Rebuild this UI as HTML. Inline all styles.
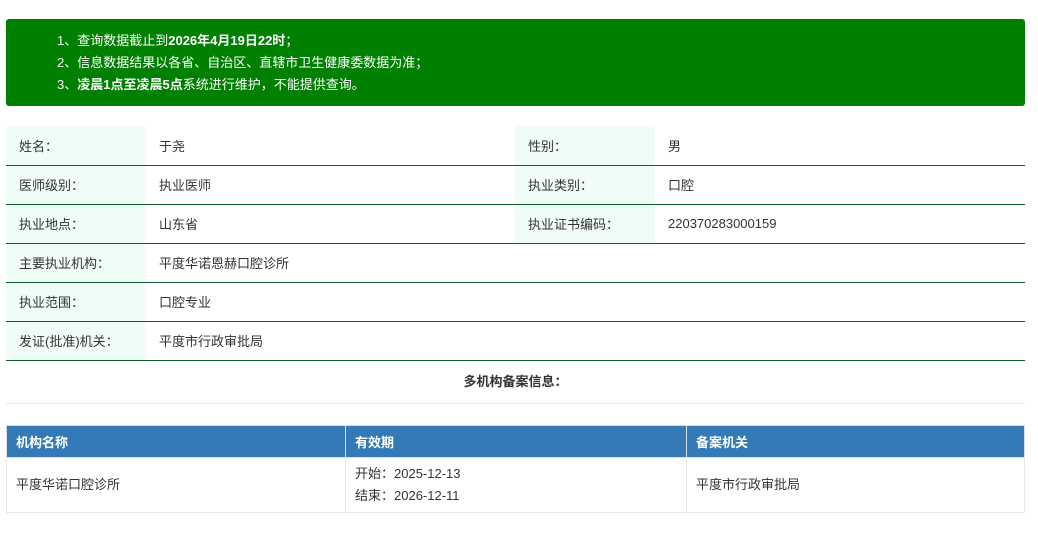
<!DOCTYPE html>
<html><head><meta charset="utf-8"><style>
*{margin:0;padding:0;box-sizing:border-box}
body{width:1038px;height:551px;background:#fff;font-family:"Liberation Sans","Noto Sans CJK SC",sans-serif;font-size:13px;color:#333;position:relative;overflow:hidden}
.notice{position:absolute;left:6px;top:19px;width:1019px;height:87px;background:#008000;border-radius:3px;color:#fff;font-size:13px;padding:11px 0 0 51px;line-height:22px}
.notice b{font-weight:bold}
table.info{position:absolute;left:6px;top:126px;width:1019px;border-collapse:collapse}
table.info td{height:39px;border-bottom:1px solid #0c5c2c;padding-left:13px;vertical-align:middle}
td.l{background:#f0fdf6;width:140px}
td.v{width:369px}
.h{position:absolute;left:6px;top:360px;width:1019px;height:44px;border-bottom:1px solid #e8e8e8;text-align:center;font-weight:bold;line-height:44px}
table.org{position:absolute;left:6px;top:425px;width:1019px;border-collapse:collapse}
table.org th{background:#337ab7;color:#fff;text-align:left;height:32px;padding-left:9px;font-weight:bold;border:1px solid #ddd}
table.org td{height:55px;padding-left:9px;border:1px solid #e8e8e8;line-height:22px}
</style></head><body>
<div class="notice">
<div>1、查询数据截止到<b>2026年4月19日22时</b>；</div>
<div>2、信息数据结果以各省、自治区、直辖市卫生健康委数据为准；</div>
<div>3、<b>凌晨1点至凌晨5点</b>系统进行维护，不能提供查询。</div>
</div>
<table class="info">
<tr><td class="l">姓名：</td><td class="v">于尧</td><td class="l">性别：</td><td>男</td></tr>
<tr><td class="l">医师级别：</td><td class="v">执业医师</td><td class="l">执业类别：</td><td>口腔</td></tr>
<tr><td class="l">执业地点：</td><td class="v">山东省</td><td class="l">执业证书编码：</td><td>220370283000159</td></tr>
<tr><td class="l">主要执业机构：</td><td colspan="3">平度华诺恩赫口腔诊所</td></tr>
<tr><td class="l">执业范围：</td><td colspan="3">口腔专业</td></tr>
<tr><td class="l">发证(批准)机关：</td><td colspan="3">平度市行政审批局</td></tr>
</table>
<div class="h">多机构备案信息：</div>
<table class="org">
<tr><th style="width:339px">机构名称</th><th style="width:341px">有效期</th><th>备案机关</th></tr>
<tr><td>平度华诺口腔诊所</td><td>开始：2025-12-13<br>结束：2026-12-11</td><td>平度市行政审批局</td></tr>
</table>
</body></html>
